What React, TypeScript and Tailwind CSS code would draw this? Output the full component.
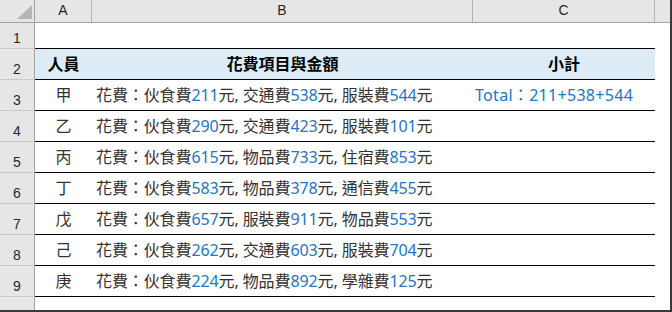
import React from 'react';

interface Person {
  row: number;
  name: string;
  items: [string, string][];
  total?: string;
}

const people: Person[] = [
  { row: 3, name: '甲', items: [['伙食費', '211'], ['交通費', '538'], ['服裝費', '544']], total: 'Total：211+538+544' },
  { row: 4, name: '乙', items: [['伙食費', '290'], ['交通費', '423'], ['服裝費', '101']] },
  { row: 5, name: '丙', items: [['伙食費', '615'], ['物品費', '733'], ['住宿費', '853']] },
  { row: 6, name: '丁', items: [['伙食費', '583'], ['物品費', '378'], ['通信費', '455']] },
  { row: 7, name: '戊', items: [['伙食費', '657'], ['服裝費', '911'], ['物品費', '553']] },
  { row: 8, name: '己', items: [['伙食費', '262'], ['交通費', '603'], ['服裝費', '704']] },
  { row: 9, name: '庚', items: [['伙食費', '224'], ['物品費', '892'], ['學雜費', '125']] },
];

const cellFont = { fontFamily: '"Noto Sans", "Noto Sans CJK TC", sans-serif' };
const headFont = { fontFamily: '"Liberation Sans", Arial, sans-serif' };

// row number cell on the left
const RowHead: React.FC<{ n: number | string }> = ({ n }) => (
  <div
    className="w-[35px] h-full shrink-0 bg-[#e6e6e6] border-r border-b border-r-[#a3a3a3] border-b-[#c8c8c8] flex items-end justify-center pb-[3px] text-[14px] font-normal leading-none text-[#262626]"
    style={headFont}
  >
    {n}
  </div>
);

export default function App() {
  return (
    <div className="w-[672px] h-[312px] bg-white border-r-2 border-b-2 border-[#3a3a3a] overflow-hidden">
      {/* column letters */}
      <div className="flex h-[23px]">
        <div className="w-[35px] h-full shrink-0 bg-[#e6e6e6] border-r border-b border-[#a3a3a3] relative">
          <svg className="absolute left-[17px] top-[5px]" width="15" height="14" viewBox="0 0 15 14">
            <polygon points="15,0 15,14 0,14" fill="#b5b5b5" />
          </svg>
        </div>
        {[
          ['A', 'w-[57px]'],
          ['B', 'w-[381px]'],
          ['C', 'w-[182px]'],
        ].map(([l, w]) => (
          <div
            key={l}
            className={`${w} h-full shrink-0 bg-[#e6e6e6] border-r border-b border-r-[#b4b4b4] border-b-[#a3a3a3] flex items-center justify-center pb-[2px] text-[14px] text-[#262626]`}
            style={headFont}
          >
            {l}
          </div>
        ))}
        <div className="flex-1 h-full bg-[#e6e6e6] border-b border-[#a3a3a3]" />
      </div>

      {/* row 1 - empty */}
      <div className="flex h-[26px]">
        <RowHead n={1} />
        <div className="w-[620px] h-full border-b border-black" />
      </div>

      {/* row 2 - headings */}
      <div className="flex h-[31px] font-bold text-[16px] text-black" style={cellFont}>
        <RowHead n={2} />
        <div className="w-[57px] h-full bg-[#ddebf7] border-b border-black flex items-center justify-center">人員</div>
        <div className="w-[381px] h-full bg-[#ddebf7] border-b border-black flex items-center justify-center">花費項目與金額</div>
        <div className="w-[182px] h-full bg-[#ddebf7] border-b border-black flex items-center justify-center">小計</div>
      </div>

      {people.map((p) => (
        <div key={p.row} className="flex h-[31px] text-[16px] text-[#333333]" style={cellFont}>
          <RowHead n={p.row} />
          <div className="w-[57px] h-full border-b border-black flex items-center justify-center">{p.name}</div>
          <div className="w-[381px] h-full border-b border-black flex items-center pl-[4px] whitespace-nowrap tracking-[-0.1px]">
            花費：
            {p.items.map(([label, amount], i) => (
              <React.Fragment key={label}>
                {i > 0 && ', '}
                {label}
                <span className="text-[#2176c7]">{amount}</span>元
              </React.Fragment>
            ))}
          </div>
          <div className="w-[182px] h-full border-b border-black flex items-center pl-[2px] text-[#2176c7] whitespace-nowrap tracking-[0.3px]">
            {p.total}
          </div>
        </div>
      ))}

      {/* row 10 - cut off by the window edge, as in the sheet */}
      <div className="flex h-[31px]">
        <RowHead n={10} />
      </div>
    </div>
  );
}
